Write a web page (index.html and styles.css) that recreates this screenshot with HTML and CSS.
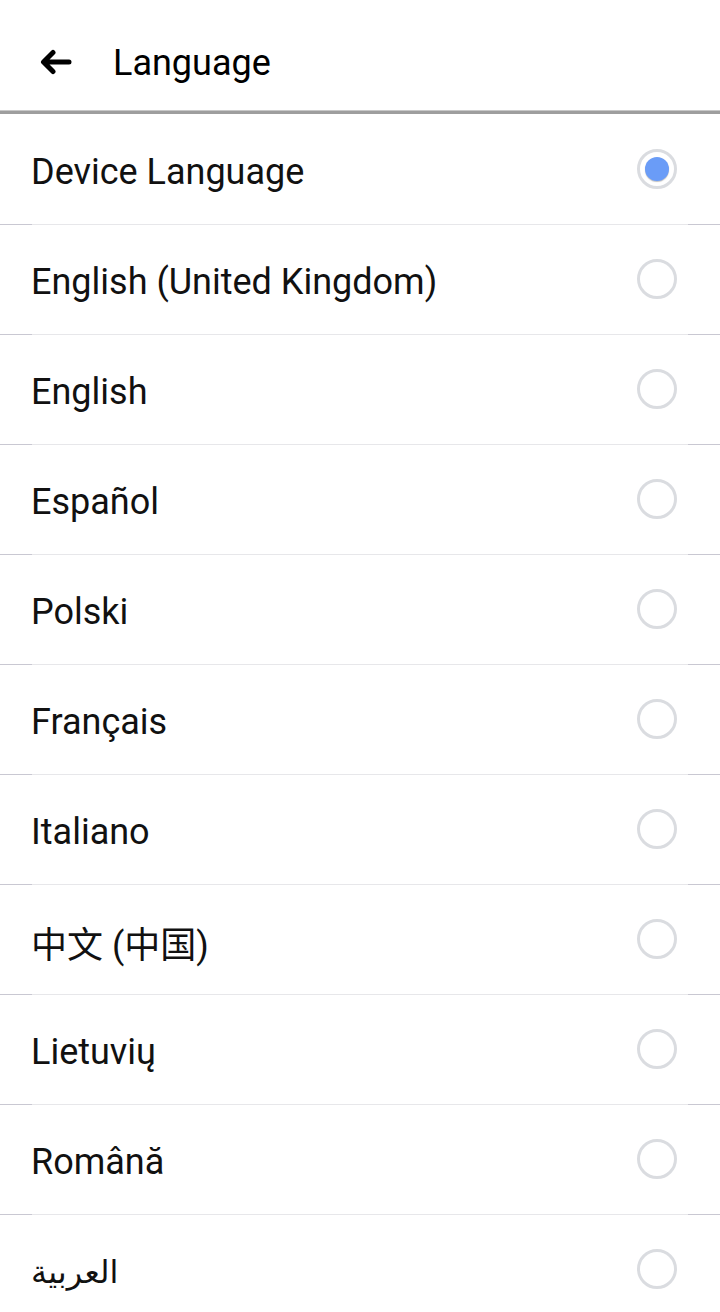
FILE: index.html
```html
<!DOCTYPE html>
<html lang="en">
<head>
<meta charset="utf-8">
<title>Language</title>
<link rel="stylesheet" href="styles.css">
</head>
<body>
<header class="topbar">
  <span class="back" aria-label="Back">
    <svg width="34" height="26" viewBox="0 0 34 26">
      <path d="M30 13 H5 M14 3.5 L4.5 13 L14 22.5" fill="none" stroke="#000" stroke-width="5" stroke-linecap="round" stroke-linejoin="round"/>
    </svg>
  </span>
  <h1 class="title">Language</h1>
</header>
<ul class="list">
  <li class="row"><span class="label">Device Language</span><span class="radio checked"></span></li>
  <li class="row"><span class="label">English (United Kingdom)</span><span class="radio"></span></li>
  <li class="row"><span class="label">English</span><span class="radio"></span></li>
  <li class="row"><span class="label">Español</span><span class="radio"></span></li>
  <li class="row"><span class="label">Polski</span><span class="radio"></span></li>
  <li class="row"><span class="label">Français</span><span class="radio"></span></li>
  <li class="row"><span class="label">Italiano</span><span class="radio"></span></li>
  <li class="row"><span class="label cjk">中文 (中国)</span><span class="radio"></span></li>
  <li class="row"><span class="label">Lietuvių</span><span class="radio"></span></li>
  <li class="row"><span class="label">Română</span><span class="radio"></span></li>
  <li class="row"><span class="label arabic">العربية</span><span class="radio"></span></li>
</ul>
</body>
</html>
```
FILE: styles.css
```css
html, body {
  margin: 0;
  padding: 0;
  background: #fff;
  font-family: Roboto, "Noto Sans", "DejaVu Sans", sans-serif;
  color: #111;
  overflow: hidden;
}
.topbar {
  height: 97px;
  padding-top: 14px;
  display: flex;
  align-items: center;
  border-bottom: 3px solid #9e9e9e;
  box-sizing: content-box;
  position: relative;
}
.topbar::after {
  content: "";
  position: absolute;
  left: 0;
  right: 0;
  bottom: 0;
  height: 1px;
  background: #c8c8c8;
  pointer-events: none;
}
.back {
  width: 34px;
  height: 26px;
  margin-left: 39px;
  margin-top: -2px;
  display: flex;
}
.title {
  margin: 0 0 0 40px;
  font-size: 36px;
  font-weight: 400;
  color: #000;
}
.list {
  list-style: none;
  margin: 0;
  padding: 1px 0 0;
}
.row {
  height: 110px;
  display: flex;
  align-items: center;
  justify-content: space-between;
  padding: 0 43px 0 31px;
  background-image: linear-gradient(to right, #c9c8d2 0, #c9c8d2 32px, #e7e7ea 32px, #e7e7ea 688px, #c9c8d2 688px);
  background-size: 100% 1px;
  background-repeat: no-repeat;
  background-position: bottom left;
}
.label {
  font-size: 36px;
  color: #111;
  margin-top: 3px;
}
.cjk {
  font-family: Roboto, "Noto Sans CJK SC", sans-serif;
}
.arabic {
  font-family: "DejaVu Sans", "Noto Sans", sans-serif;
  font-size: 32px;
}
.radio {
  width: 40px;
  height: 40px;
  box-sizing: border-box;
  border: 3px solid #dadce0;
  border-radius: 50%;
  display: flex;
  align-items: center;
  justify-content: center;
  margin-top: -2px;
}
.radio.checked::after {
  content: "";
  width: 24px;
  height: 24px;
  border-radius: 50%;
  background: #6a9cf7;
  box-shadow: 0 1px 1px rgba(0,0,0,0.25);
}
```
